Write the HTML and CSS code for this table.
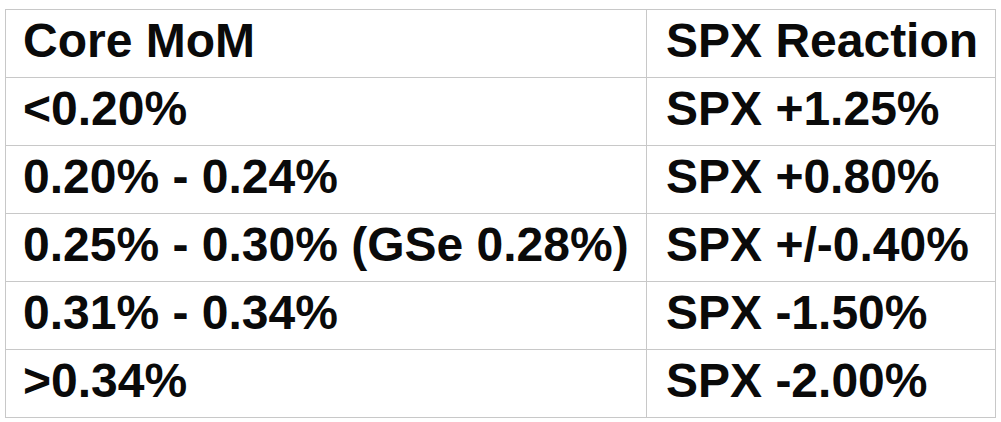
FILE: index.html
```html
<!DOCTYPE html>
<html>
<head>
<meta charset="utf-8">
<link rel="stylesheet" href="styles.css">
</head>
<body>
<div class="table">
  <div class="cell">Core MoM</div>
  <div class="cell col2">SPX Reaction</div>
  <div class="cell">&lt;0.20%</div>
  <div class="cell col2">SPX +1.25%</div>
  <div class="cell">0.20% - 0.24%</div>
  <div class="cell col2">SPX +0.80%</div>
  <div class="cell">0.25% - 0.30% (GSe 0.28%)</div>
  <div class="cell col2">SPX +/-0.40%</div>
  <div class="cell">0.31% - 0.34%</div>
  <div class="cell col2">SPX -1.50%</div>
  <div class="cell">&gt;0.34%</div>
  <div class="cell col2">SPX -2.00%</div>
</div>
</body>
</html>
```
FILE: styles.css
```css
html, body {
  margin: 0;
  padding: 0;
  background: #ffffff;
}
body {
  padding: 9px 0 0 5px;
}
.table {
  display: grid;
  grid-template-columns: 641px 349px;
  grid-auto-rows: 68px;
  width: 990px;
  border-left: 1px solid #c8c8c8;
  border-top: 1px solid #c8c8c8;
  font-family: "Liberation Sans", Arial, sans-serif;
  font-weight: bold;
  font-size: 48px;
  line-height: 56px;
  color: #0a0a0a;
}
.cell {
  box-sizing: border-box;
  border-right: 1px solid #c8c8c8;
  border-bottom: 1px solid #c8c8c8;
  padding: 3px 0 8px 17px;
  white-space: nowrap;
}
.col2 {
  padding-left: 19px;
}
```
